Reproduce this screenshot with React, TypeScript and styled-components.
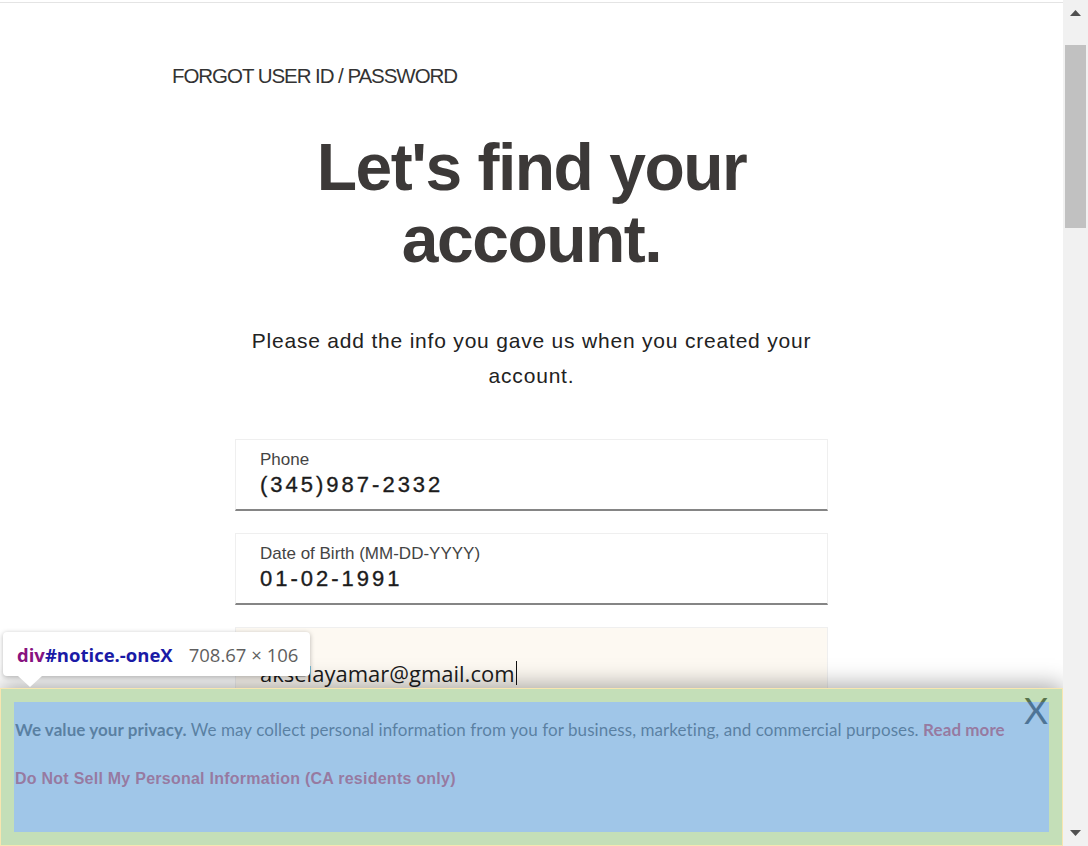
import React from "react";
import styled, { createGlobalStyle } from "styled-components";

const GlobalStyle = createGlobalStyle`
  html, body {
    margin: 0;
    padding: 0;
    height: 846px;
    overflow: hidden;
    background: #ffffff;
  }
  body {
    font-family: "Liberation Sans", Arial, sans-serif;
  }
  *, *::before, *::after {
    box-sizing: border-box;
  }
`;

const Screen = styled.div`
  display: flex;
  width: 1088px;
  height: 846px;
  overflow: hidden;
`;

const Viewport = styled.div`
  position: relative;
  flex: 0 0 1063px;
  height: 846px;
  overflow: hidden;
  background: #ffffff;
`;

const TopRule = styled.div`
  height: 3px;
  border-bottom: 1px solid #e4e4e4;
`;

const Page = styled.main`
  display: flex;
  flex-direction: column;
`;

const Eyebrow = styled.div`
  margin: 61px 0 0 172px;
  font-size: 20.5px;
  line-height: 24px;
  letter-spacing: -1.05px;
  color: #333333;
`;

const Title = styled.h1`
  margin: 43px auto 0;
  max-width: 500px;
  text-align: center;
  font-size: 66px;
  line-height: 72px;
  font-weight: 700;
  letter-spacing: -1.5px;
  color: #3c3938;
`;

const Lead = styled.p`
  margin: 48px auto 0;
  max-width: 600px;
  text-align: center;
  font-size: 21px;
  line-height: 35px;
  letter-spacing: 0.8px;
  color: #222222;
`;

const Form = styled.form`
  display: flex;
  flex-direction: column;
  gap: 22px;
  width: 593px;
  margin: 46px auto 0;
`;

const Field = styled.div<{ $autofill?: boolean }>`
  height: 72px;
  padding: 10px 24px 11px;
  background: ${(p) => (p.$autofill ? "#fdf9f2" : "#ffffff")};
  border: 1px solid #efefef;
  border-bottom: 2px solid #858585;
`;

const FieldLabel = styled.div`
  height: 20px;
  margin-bottom: 2px;
  font-size: 17px;
  line-height: 20px;
  color: #444444;
`;

const FieldValue = styled.div<{ $plain?: boolean }>`
  display: flex;
  align-items: center;
  height: 26px;
  font-family: ${(p) =>
    p.$plain ? '"Open Sans", sans-serif' : '"Liberation Sans", Arial, sans-serif'};
  font-size: 22px;
  line-height: 26px;
  letter-spacing: ${(p) => (p.$plain ? "0" : "3px")};
  color: #1c1c1c;
  -webkit-text-stroke: ${(p) => (p.$plain ? "0" : "0.35px #1c1c1c")};
`;

const Caret = styled.span`
  display: inline-block;
  width: 0;
  height: 24px;
  margin-left: 1px;
  border-left: 1.5px solid #111111;
`;

const Notice = styled.section`
  position: absolute;
  left: 0;
  bottom: 0;
  z-index: 2;
  width: 1063px;
  height: 158px;
  padding: 13px;
  background: #ffffff;
  border: 1px solid #f8e6b0;
  box-shadow: 0 -3px 22px rgba(0, 0, 0, 0.35);
`;

const NoticeText = styled.p`
  margin: 16px 0 0;
  padding-left: 1px;
  font-family: "Lato", sans-serif;
  font-size: 17px;
  line-height: 24px;
  letter-spacing: 0.07px;
  color: #333333;
`;

const NoticeStrong = styled.strong`
  font-weight: 700;
`;

const NoticeLink = styled.a`
  font-weight: 700;
  color: #e3202e;
  text-decoration: none;
`;

const OptOut = styled.a`
  display: block;
  margin-top: 25px;
  padding-left: 1px;
  font-family: "Liberation Sans", Arial, sans-serif;
  font-size: 16px;
  line-height: 24px;
  font-weight: 700;
  letter-spacing: 0.25px;
  color: #e3202e;
  text-decoration: none;
`;

const CloseButton = styled.button`
  position: absolute;
  top: 3px;
  right: 14px;
  padding: 0;
  border: 0;
  background: none;
  font-family: "Lato", sans-serif;
  font-size: 37px;
  line-height: 36px;
  color: #111111;
`;

const PaddingHighlight = styled.div`
  position: absolute;
  inset: 0;
  z-index: 1;
  border: 13px solid rgba(147, 196, 125, 0.55);
  pointer-events: none;
`;

const ContentHighlight = styled.div`
  position: absolute;
  inset: 13px;
  z-index: 1;
  background: rgba(111, 168, 220, 0.66);
  pointer-events: none;
`;

const InspectTip = styled.div`
  position: absolute;
  left: 3px;
  top: 632px;
  z-index: 3;
  display: flex;
  align-items: center;
  gap: 16px;
  height: 44px;
  padding: 0 12px 0 14px;
  background: #ffffff;
  border-radius: 4px;
  box-shadow: 0 1px 5px rgba(0, 0, 0, 0.28);
  font-family: "Open Sans", sans-serif;
  font-size: 18.5px;
  white-space: nowrap;

  &::after {
    content: "";
    position: absolute;
    left: 15px;
    top: 100%;
    border-left: 12px solid transparent;
    border-right: 12px solid transparent;
    border-top: 11px solid #ffffff;
  }
`;

const TipSelector = styled.span`
  font-weight: 700;
  color: #1a1aa6;
`;

const TipTag = styled.span`
  color: #881280;
`;

const TipSize = styled.span`
  color: #5f5f5f;
`;

const Scrollbar = styled.div`
  display: flex;
  flex-direction: column;
  flex: 0 0 25px;
  height: 846px;
  background: #f1f1f1;
`;

const ScrollButton = styled.div`
  display: flex;
  align-items: center;
  justify-content: center;
  height: 26px;
  flex: 0 0 26px;
`;

const ScrollTrack = styled.div`
  flex: 1;
  padding: 19px 2px 0;
`;

const ScrollThumb = styled.div`
  height: 183px;
  background: #c1c1c1;
`;

const Arrow = ({ down }: { down?: boolean }) => (
  <svg width="11" height="6" viewBox="0 0 11 6">
    <polygon
      points={down ? "0,0 11,0 5.5,6" : "0,6 11,6 5.5,0"}
      fill="#505050"
    />
  </svg>
);

export default function App() {
  return (
    <>
      <GlobalStyle />
      <Screen>
        <Viewport>
          <TopRule />
          <Page>
            <Eyebrow>FORGOT USER ID / PASSWORD</Eyebrow>
            <Title>Let's find your account.</Title>
            <Lead>Please add the info you gave us when you created your account.</Lead>
            <Form onSubmit={(e) => e.preventDefault()}>
              <Field>
                <FieldLabel>Phone</FieldLabel>
                <FieldValue>(345)987-2332</FieldValue>
              </Field>
              <Field>
                <FieldLabel>Date of Birth (MM-DD-YYYY)</FieldLabel>
                <FieldValue>01-02-1991</FieldValue>
              </Field>
              <Field $autofill>
                <FieldLabel aria-hidden="true" />
                <FieldValue $plain>
                  akselayamar@gmail.com
                  <Caret />
                </FieldValue>
              </Field>
            </Form>
          </Page>

          <Notice id="notice">
            <NoticeText>
              <NoticeStrong>We value your privacy.</NoticeStrong> We may collect personal
              information from you for business, marketing, and commercial purposes.{" "}
              <NoticeLink href="#">Read more</NoticeLink>
            </NoticeText>
            <OptOut href="#">Do Not Sell My Personal Information (CA residents only)</OptOut>
            <CloseButton type="button">X</CloseButton>
            <PaddingHighlight />
            <ContentHighlight />
          </Notice>

          <InspectTip>
            <TipSelector>
              <TipTag>div</TipTag>#notice.-oneX
            </TipSelector>
            <TipSize>708.67 × 106</TipSize>
          </InspectTip>
        </Viewport>
        <Scrollbar>
          <ScrollButton>
            <Arrow />
          </ScrollButton>
          <ScrollTrack>
            <ScrollThumb />
          </ScrollTrack>
          <ScrollButton>
            <Arrow down />
          </ScrollButton>
        </Scrollbar>
      </Screen>
    </>
  );
}
